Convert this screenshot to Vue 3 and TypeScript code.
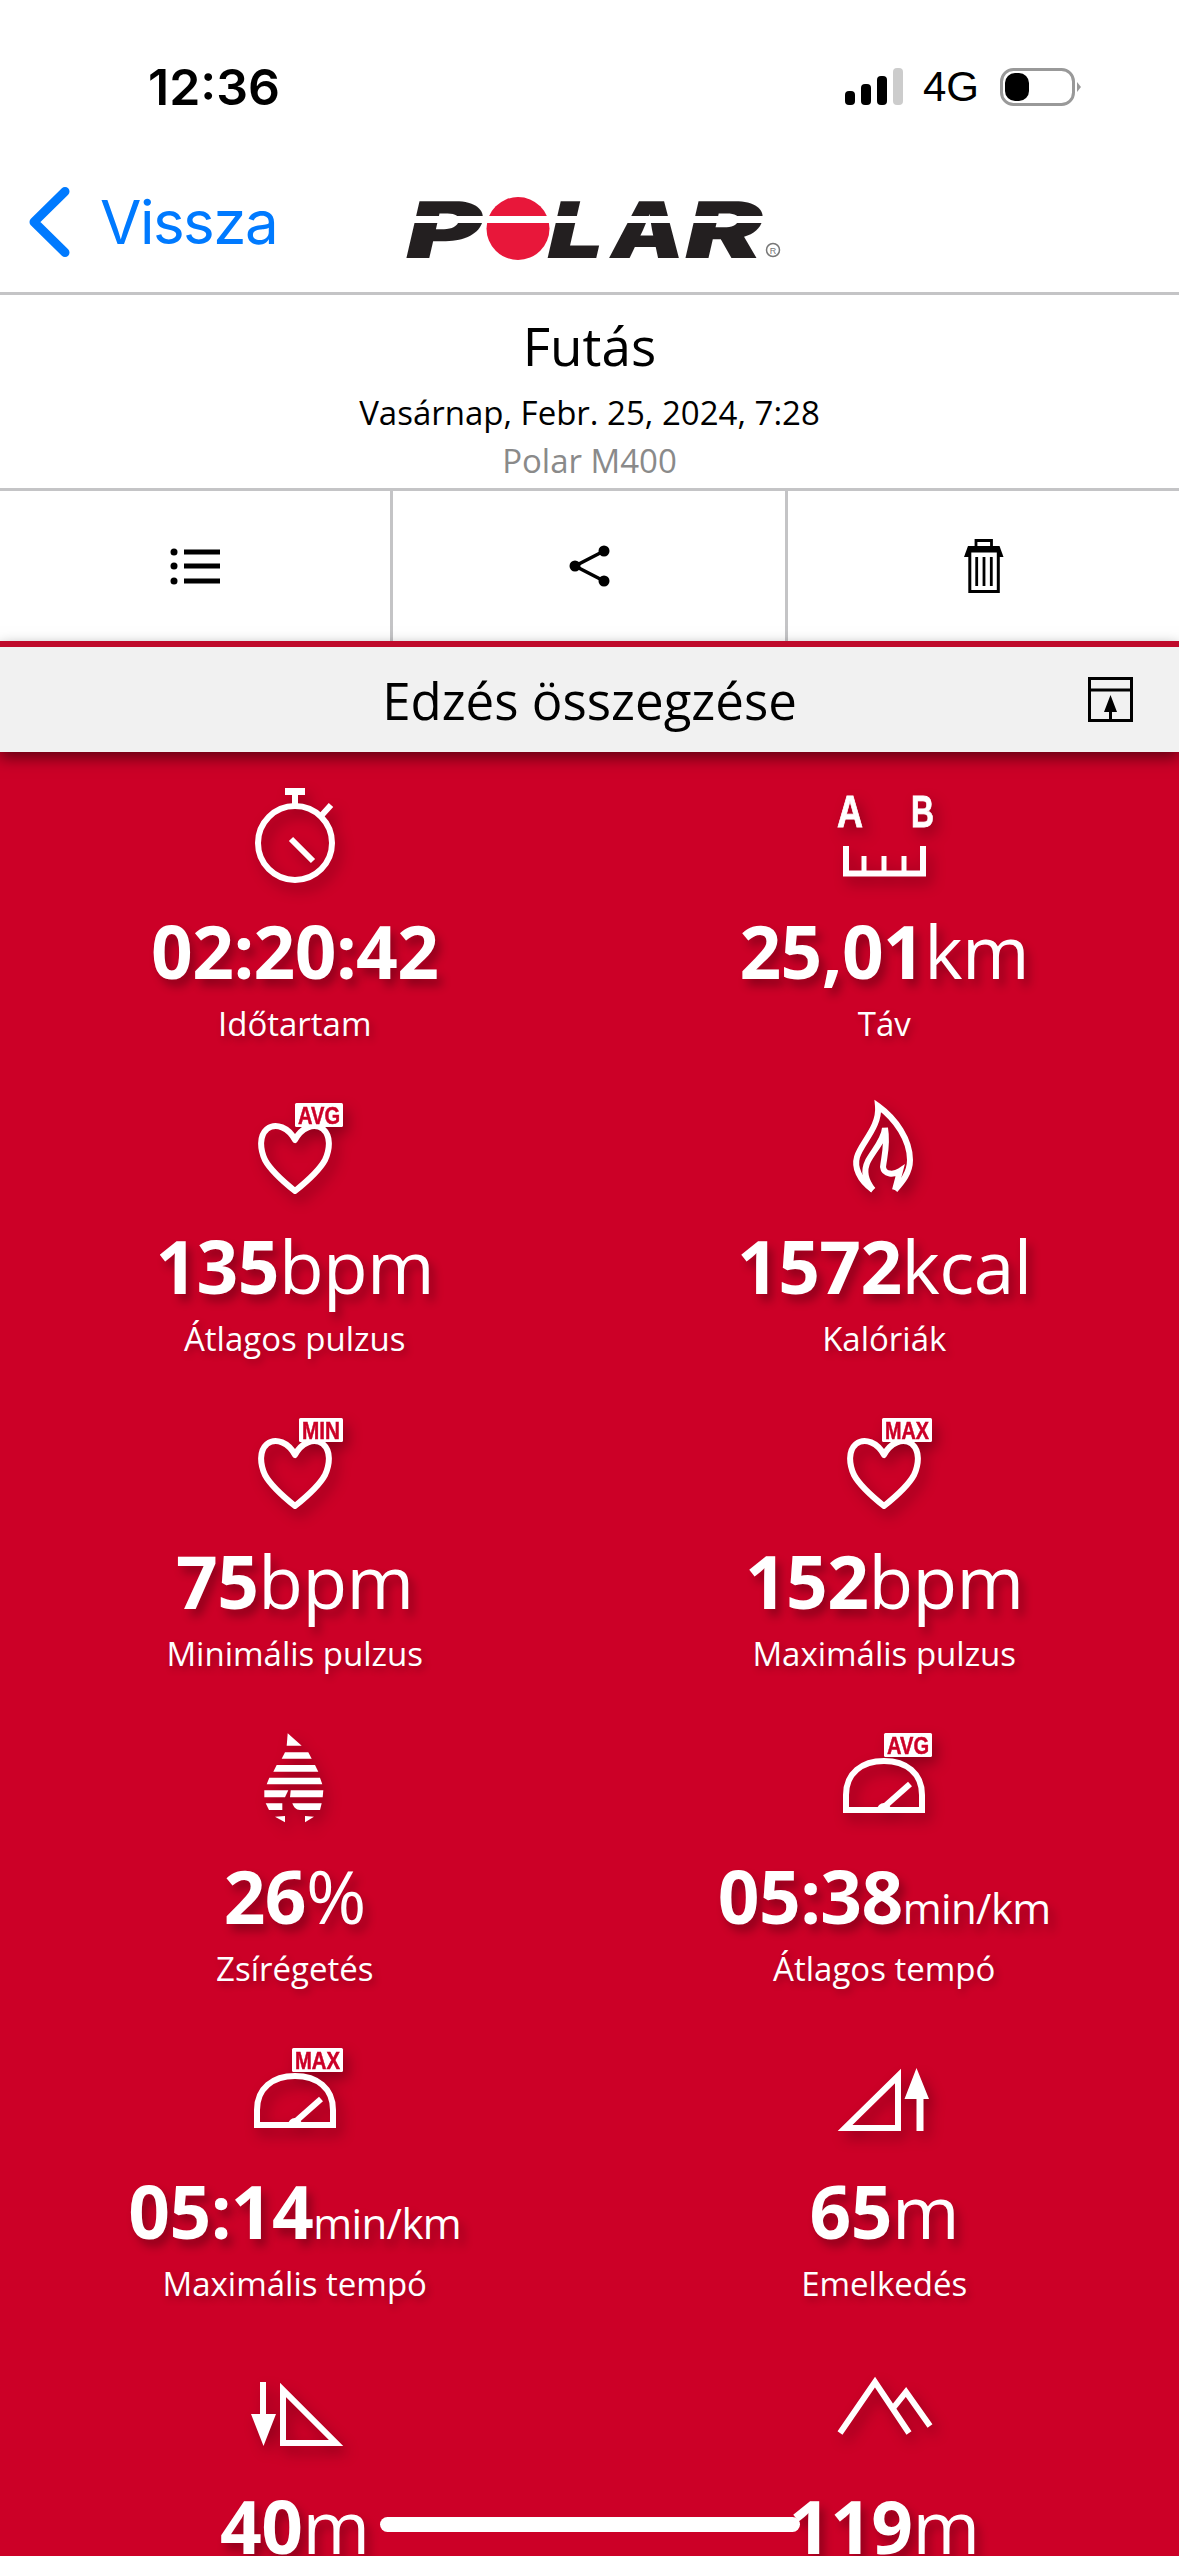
<template>
  <div class="page">
    <div class="status">
      <span class="time">12:36</span>
      <div class="status-right">
        <svg class="signal" width="58" height="38" viewBox="0 0 58 38">
          <rect x="0" y="23" width="10" height="14" rx="4" fill="#000" />
          <rect x="16" y="16" width="10" height="21" rx="4" fill="#000" />
          <rect x="32" y="8" width="10" height="29" rx="4" fill="#000" />
          <rect x="48" y="0" width="10" height="37" rx="4" fill="#ccc" />
        </svg>
        <span class="net">4G</span>
        <svg class="battery" width="81" height="38" viewBox="0 0 81 38">
          <rect x="1.500" y="1.500" width="72" height="35" rx="12" fill="none" stroke="#999" stroke-width="3" />
          <rect x="5" y="5" width="24" height="28" rx="10" fill="#000" />
          <path d="M77 14l4 5-4 5z" fill="#999" />
        </svg>
      </div>
    </div>

    <div class="nav">
      <div class="back">
        <svg width="48" height="80" viewBox="0 0 48 80">
          <path d="M39 9.500 8 40l31 30.500" fill="none" stroke="#007aff" stroke-width="9" stroke-linecap="round" stroke-linejoin="round" />
        </svg>
        <span class="back-text">Vissza</span>
      </div>
      <svg class="logo" width="384" height="66" viewBox="0 0 384 66">
        <g class="logo-letters" fill="#231f20">
          <text transform="translate(1 61) skewX(-13)" textLength="76" lengthAdjust="spacingAndGlyphs">P</text>
          <text transform="translate(143 61) skewX(-13)" textLength="56" lengthAdjust="spacingAndGlyphs">L</text>
          <text transform="translate(207 61) skewX(-8)" textLength="74" lengthAdjust="spacingAndGlyphs">A</text>
          <text transform="translate(280 61) skewX(-13)" textLength="78" lengthAdjust="spacingAndGlyphs">R</text>
        </g>
        <circle cx="118" cy="31.500" r="31.500" fill="#e8173a" />
        <rect x="0" y="19" width="366" height="7" fill="#fff" />
        <circle cx="373" cy="53" r="6.500" fill="none" stroke="#777" stroke-width="1.500" />
        <text class="logo-r" x="373" y="56.500" text-anchor="middle">R</text>
      </svg>
    </div>

    <div class="head">
      <div class="title">Futás</div>
      <div class="date">Vasárnap, Febr. 25, 2024, 7:28</div>
      <div class="device">Polar M400</div>
    </div>

    <div class="tools">
      <div class="tool">
        <svg width="50" height="38" viewBox="0 0 50 38">
          <circle cx="4" cy="5" r="3.500" />
          <circle cx="4" cy="19" r="3.500" />
          <circle cx="4" cy="34" r="3.500" />
          <rect x="14" y="2.500" width="36" height="5" />
          <rect x="14" y="16.500" width="36" height="5" />
          <rect x="14" y="31.500" width="36" height="5" />
        </svg>
      </div>
      <div class="tool">
        <svg width="42" height="42" viewBox="-1 0 42 42">
          <path d="M35 6 6 21l29 15" fill="none" stroke="#000" stroke-width="3.500" />
          <circle cx="6" cy="21" r="5.500" />
          <circle cx="35" cy="6" r="5.500" />
          <circle cx="35" cy="36" r="5.500" />
        </svg>
      </div>
      <div class="tool">
        <svg width="40" height="54" viewBox="0 0 40 54">
          <path d="M12 8V1.500h15.500V8" fill="none" stroke="#000" stroke-width="2.800" />
          <path d="M4 7h31.500L39.500 18H0z" />
          <rect x="5.800" y="12" width="28.500" height="40.500" fill="#fff" stroke="#000" stroke-width="3" />
          <path d="M12.700 18v29M20 18v29M27.300 18v29" stroke="#000" stroke-width="2.800" />
        </svg>
      </div>
    </div>

    <div class="section">
      <span class="section-title">Edzés összegzése</span>
      <svg class="section-icon" width="45" height="45" viewBox="0 0 45 45">
        <rect x="1.500" y="1.500" width="42" height="42" fill="none" stroke="#000" stroke-width="3" />
        <path d="M1.500 13h42" stroke="#000" stroke-width="3" />
        <path d="M22.500 18l6.500 17h-5v9h-3v-9h-5z" />
      </svg>
    </div>

    <div class="grid">
      <div v-for="item in items" :key="item.value + item.unit" class="item">
        <svg class="icon" width="160" height="110" viewBox="0 0 160 110">
          <g v-if="item.icon === 'time'">
            <circle cx="80" cy="63" r="37" class="line" />
            <path d="M70 8h20v7H70zM77 15h6v10h-6z" class="solid" />
            <path d="M106 36l10-11M76 59l22 22" class="line" />
          </g>
          <g v-else-if="item.icon === 'distance'">
            <text class="ab" x="33" y="47" textLength="26" lengthAdjust="spacingAndGlyphs">A</text>
            <text class="ab" x="107" y="47" textLength="23" lengthAdjust="spacingAndGlyphs">B</text>
            <path d="M42 66v27.500h77V66" class="line" />
            <path d="M60 76v16M80 76v16M100 76v16" class="thin" />
          </g>
          <g v-else-if="item.icon === 'heart'">
            <path d="M80 45C74 33 61 27 52 34 44 41 45 54 50 65 56 76 70 88 80 96 90 88 104 76 110 65 115 54 116 41 108 34 99 27 86 33 80 45z" class="line" stroke-linejoin="round" />
          </g>
          <g v-else-if="item.icon === 'flame'">
            <path d="M69 95C55 85 50 72 53 62 57 48 76 32 74 11 92 24 106 45 106 65 106 78 98 87 91 95" class="line" />
            <path d="M69 95C60 84 60 74 64 66 70 55 80 45 81 33 84 50 80 62 79 72 80 80 90 80 96 76L91 95" class="line" />
          </g>
          <g v-else-if="item.icon === 'fat'" class="solid">
            <polygon points="72.700,8.300 86.700,20.700 71.700,20.700" />
            <polygon points="70,27.300 93.300,27.300 96.700,33.700 66.700,33.700" />
            <polygon points="61.700,40 100,40 103.300,46.700 58.300,46.700" />
            <polygon points="54.300,52.700 105,52.700 107.300,59.300 51.700,59.300" />
            <polygon points="49.300,65.300 73.300,65.300 70,72.300 49.300,72.300" />
            <polygon points="75.700,65.300 108.300,65.300 107.700,72.300 75,72.300" />
            <polygon points="50.700,78.300 67.300,78.300 67.300,85 54,85" />
            <path d="M77.300 78.300h29.400l-1.700 6.700H85c-4 0-6.500-3-7.700-6.700z" />
            <polygon points="60,91.700 70,91 70,97.300" />
            <polygon points="90,91 99,91.700 90,97.300" />
          </g>
          <g v-else-if="item.icon === 'pace'">
            <path d="M42 85V70C42 48 58 36 80 36S118 48 118 70V85z" class="line" />
            <path d="M80 82l26-23" class="line" />
            <path d="M73 85a7 7 0 0 1 14 0z" class="solid" />
          </g>
          <g v-else-if="item.icon === 'ascent'">
            <path d="M94 36V88H41z" class="line" />
            <path d="M112.500 28L125 59h-5.500v32h-7v-32h-12z" class="solid" />
          </g>
          <g v-else-if="item.icon === 'descent'">
            <path d="M68 35V88H121z" class="line" />
            <path d="M48.500 91L36 59h9V27h6v32h10z" class="solid" />
          </g>
          <g v-else-if="item.icon === 'peak'">
            <path d="M36 78L71 27 105 78M90 52L102 37 126 71" class="line" />
          </g>

          <g v-if="item.badge">
            <rect :x="item.badgeX" y="8" :width="128 - item.badgeX" height="24" rx="1.500" class="solid" />
            <text class="badge" :x="item.badgeX + 3" y="29" :textLength="128 - item.badgeX - 6" lengthAdjust="spacingAndGlyphs">{{ item.badge }}</text>
          </g>
        </svg>
        <div class="value">
          <b>{{ item.value }}</b><span :class="{ small: item.unit === 'min/km' }">{{ item.unit }}</span>
        </div>
        <div v-if="item.label" class="label">{{ item.label }}</div>
      </div>
    </div>

    <div class="home"></div>
  </div>
</template>

<script setup lang="ts">
interface Metric {
  icon: string
  value: string
  unit: string
  label: string
  badge?: string
  badgeX?: number
}

const items: Metric[] = [
  { icon: 'time', value: '02:20:42', unit: '', label: 'Időtartam' },
  { icon: 'distance', value: '25,01', unit: 'km', label: 'Táv' },
  { icon: 'heart', value: '135', unit: 'bpm', label: 'Átlagos pulzus', badge: 'AVG', badgeX: 80 },
  { icon: 'flame', value: '1572', unit: 'kcal', label: 'Kalóriák' },
  { icon: 'heart', value: '75', unit: 'bpm', label: 'Minimális pulzus', badge: 'MIN', badgeX: 84 },
  { icon: 'heart', value: '152', unit: 'bpm', label: 'Maximális pulzus', badge: 'MAX', badgeX: 78 },
  { icon: 'fat', value: '26', unit: '%', label: 'Zsírégetés' },
  { icon: 'pace', value: '05:38', unit: 'min/km', label: 'Átlagos tempó', badge: 'AVG', badgeX: 80 },
  { icon: 'pace', value: '05:14', unit: 'min/km', label: 'Maximális tempó', badge: 'MAX', badgeX: 77 },
  { icon: 'ascent', value: '65', unit: 'm', label: 'Emelkedés' },
  { icon: 'descent', value: '40', unit: 'm', label: '' },
  { icon: 'peak', value: '119', unit: 'm', label: '' }
]
</script>

<style>
html,
body {
  margin: 0;
  background: #fff;
}
</style>

<style scoped>
.page {
  position: relative;
  width: 1179px;
  height: 2556px;
  overflow: hidden;
  background: #cc0027;
  font-family: "Open Sans", "Liberation Sans", sans-serif;
  color: #000;
}

.status {
  display: flex;
  box-sizing: border-box;
  height: 130px;
  padding: 60px 98px 0 148px;
  background: #fff;
}

.time {
  font-family: Inter, "Liberation Sans", sans-serif;
  font-size: 50px;
  font-weight: 600;
  line-height: 54px;
}

.status-right {
  display: flex;
  align-items: flex-start;
  margin-left: auto;
  margin-top: 8px;
}

.net {
  margin: 0 21px 0 20px;
  font-family: "Liberation Sans", Arial, sans-serif;
  font-size: 42px;
  line-height: 38px;
}

.nav {
  display: flex;
  box-sizing: border-box;
  height: 165px;
  padding-top: 52px;
  background: #fff;
  border-bottom: 3px solid #c4c4c6;
}

.back {
  display: flex;
  box-sizing: border-box;
  width: 400px;
  height: 80px;
  padding-left: 26px;
}

.back-text {
  margin-left: 26px;
  color: #007aff;
  font-family: Inter, "Liberation Sans", sans-serif;
  font-size: 60px;
  letter-spacing: -1.500px;
  line-height: 80px;
}

.logo {
  margin-top: 15px;
  overflow: visible;
}

.logo-letters {
  font-family: Inter, "Liberation Sans", sans-serif;
  font-size: 78px;
  font-weight: 900;
}

.logo-r {
  fill: #777;
  font-family: "Liberation Sans", sans-serif;
  font-size: 9px;
}

.head {
  box-sizing: border-box;
  height: 196px;
  padding-top: 21px;
  background: #fff;
  border-bottom: 3px solid #c4c4c6;
  text-align: center;
}

.title {
  font-size: 53px;
  line-height: 60px;
}

.date {
  margin-top: 14px;
  font-size: 33px;
  line-height: 46px;
}

.device {
  margin-top: 3px;
  color: #8a8a8a;
  font-size: 33px;
  line-height: 44px;
}

.tools {
  display: grid;
  grid-template-columns: 393px 395px 1fr;
  height: 150px;
  background: #fff;
}

.tool {
  display: flex;
  align-items: center;
  justify-content: center;
  box-sizing: border-box;
}

.tool:not(:last-child) {
  border-right: 3px solid #c4c4c6;
}

.section {
  position: relative;
  z-index: 1;
  display: flex;
  align-items: center;
  justify-content: center;
  height: 105px;
  background: #f1f1f1;
  border-top: 6px solid #bf0a2b;
  box-shadow: 0 6px 14px rgba(0, 0, 0, 0.5);
}

.section-title {
  font-size: 51px;
}

.section-icon {
  position: absolute;
  top: 30px;
  right: 46px;
}

.grid {
  display: grid;
  grid-template-columns: 1fr 1fr;
  grid-auto-rows: 315px;
  padding-top: 28px;
}

.item {
  display: flex;
  flex-direction: column;
  align-items: center;
  color: #fff;
}

.icon {
  overflow: visible;
  filter: drop-shadow(5px 7px 7px rgba(0, 0, 0, 0.3));
}

.line {
  fill: none;
  stroke: #fff;
  stroke-width: 6px;
}

.thin {
  fill: none;
  stroke: #fff;
  stroke-width: 5px;
}

.solid {
  fill: #fff;
}

.ab {
  fill: #fff;
  stroke: #fff;
  stroke-width: 0.800px;
  font-family: "Liberation Sans", sans-serif;
  font-size: 44px;
  font-weight: 700;
}

.badge {
  fill: #cc0027;
  stroke: #cc0027;
  stroke-width: 0.500px;
  font-family: "Liberation Sans", sans-serif;
  font-size: 24px;
  font-weight: 700;
}

.value {
  margin-top: 21px;
  font-size: 73px;
  font-weight: 400;
  letter-spacing: -0.600px;
  line-height: 80px;
  white-space: nowrap;
  text-shadow: 5px 7px 10px rgba(0, 0, 0, 0.3);
}

.value b {
  font-weight: 700;
}

.value .small {
  font-size: 42px;
  line-height: 0;
}

.label {
  margin-top: 8px;
  font-size: 33px;
  font-weight: 400;
  line-height: 50px;
  text-shadow: 3px 4px 7px rgba(0, 0, 0, 0.25);
}

.home {
  position: absolute;
  left: 380px;
  bottom: 24px;
  width: 420px;
  height: 15px;
  border-radius: 8px;
  background: #fff;
}
</style>
